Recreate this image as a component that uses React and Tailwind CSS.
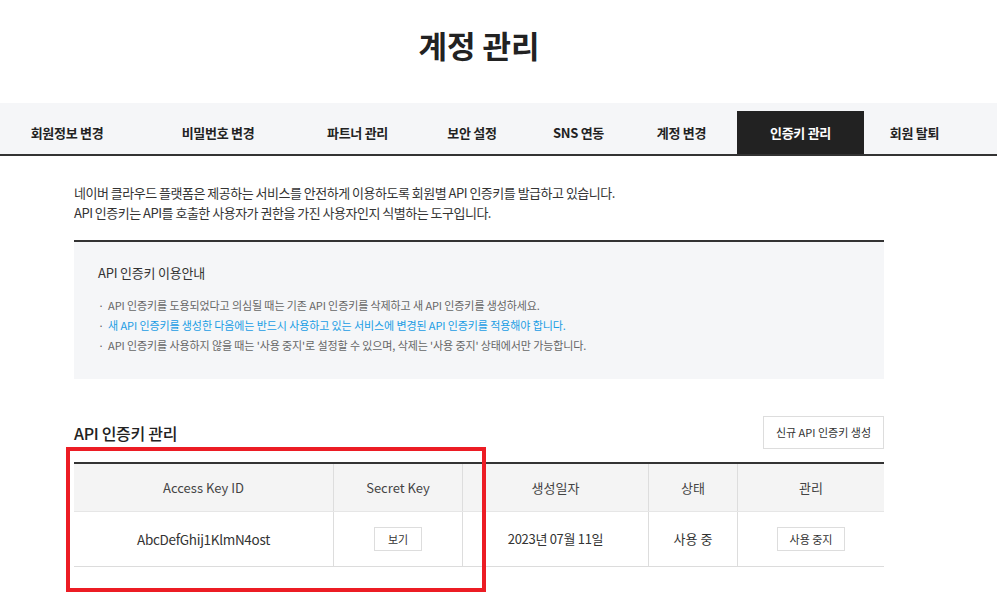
import React from "react";

const tabs = [
  { label: "회원정보 변경", w: "w-[134px]" },
  { label: "비밀번호 변경", w: "w-[168px]" },
  { label: "파트너 관리", w: "w-[111px]" },
  { label: "보안 설정", w: "w-[118px]" },
  { label: "SNS 연동", w: "w-[95px]" },
  { label: "계정 변경", w: "w-[111px]" },
  { label: "인증키 관리", w: "w-[127px]", active: true },
  { label: "회원 탈퇴", w: "w-[101px]" },
];

export default function App() {
  return (
    <div
      className="w-[997px] min-h-[596px] bg-white text-[#222]"
      style={{ fontFamily: "'Noto Sans CJK KR', 'Noto Sans', sans-serif" }}
    >
      <div className="w-[958px] h-[103px] flex justify-center">
        <h1 className="pt-[27px] text-[31px] leading-[36px] font-bold text-[#222]">계정 관리</h1>
      </div>

      <div className="w-full h-[53px] bg-[#f5f6f8] border-b-2 border-[#333] flex items-end">
        {tabs.map((t) => (
          <div
            key={t.label}
            className={`${t.w} h-[43px] flex items-center justify-center text-[13px] font-semibold tracking-[-0.3px] ${
              t.active ? "bg-[#222] text-white" : "text-[#222]"
            }`}
          >
            {t.label}
          </div>
        ))}
      </div>

      <div className="w-[958px] px-[74px]">
        <div className="mt-[27px] text-[13px] leading-[20px] tracking-[-0.5px] text-[#333]">
          <p>네이버 클라우드 플랫폼은 제공하는 서비스를 안전하게 이용하도록 회원별 API 인증키를 발급하고 있습니다.</p>
          <p>API 인증키는 API를 호출한 사용자가 권한을 가진 사용자인지 식별하는 도구입니다.</p>
        </div>

        <div className="mt-[17px] border-t-2 border-[#333] bg-[#f5f6f8] pt-[22px] pb-[24px] px-[24px]">
          <p className="text-[13px] leading-[18px] tracking-[-0.2px] text-[#333]">API 인증키 이용안내</p>
          <ul className="mt-[13px] text-[11px] leading-[20px] tracking-[-0.1px] text-[#666]">
            <li className="flex gap-[4px]"><span>·</span><span>API 인증키를 도용되었다고 의심될 때는 기존 API 인증키를 삭제하고 새 API 인증키를 생성하세요.</span></li>
            <li className="flex gap-[4px] text-[#1a9de4]"><span className="text-[#666]">·</span><span>새 API 인증키를 생성한 다음에는 반드시 사용하고 있는 서비스에 변경된 API 인증키를 적용해야 합니다.</span></li>
            <li className="flex gap-[4px]"><span>·</span><span>API 인증키를 사용하지 않을 때는 '사용 중지'로 설정할 수 있으며, 삭제는 '사용 중지' 상태에서만 가능합니다.</span></li>
          </ul>
        </div>

        <div className="mt-[37px] h-[33px] flex items-center justify-between">
          <h2 className="text-[16px] font-medium tracking-[-0.3px] text-[#222]">API 인증키 관리</h2>
          <button className="h-[33px] px-[12px] border border-[#ddd] bg-white text-[11px] text-[#333]">신규 API 인증키 생성</button>
        </div>

        <div className="relative mt-[13px]">
          <div className="border-t-2 border-[#333]">
            <div className="grid grid-cols-[260px_129px_186px_89px_146px] bg-[#f4f4f4] h-[48px] text-[13px] text-[#444] border-b border-[#e6e6e6]">
              <div className="flex items-center justify-center border-r border-[#ddd]">Access Key ID</div>
              <div className="flex items-center justify-center border-r border-[#ddd]">Secret Key</div>
              <div className="flex items-center justify-center border-r border-[#ddd]">생성일자</div>
              <div className="flex items-center justify-center border-r border-[#ddd]">상태</div>
              <div className="flex items-center justify-center">관리</div>
            </div>
            <div className="grid grid-cols-[260px_129px_186px_89px_146px] h-[55px] text-[13px] text-[#333] border-b border-[#dcdcdc]">
              <div className="flex items-center justify-center border-r border-[#ddd] text-[13.5px] tracking-[-0.3px]">AbcDefGhij1KlmN4ost</div>
              <div className="flex items-center justify-center border-r border-[#ddd]">
                <button className="h-[24px] px-[13px] border border-[#ddd] bg-white text-[11px] text-[#333]">보기</button>
              </div>
              <div className="flex items-center justify-center border-r border-[#ddd] tracking-[-0.3px]">2023년 07월 11일</div>
              <div className="flex items-center justify-center border-r border-[#ddd]">사용 중</div>
              <div className="flex items-center justify-center">
                <button className="h-[24px] px-[12px] border border-[#ddd] bg-white text-[11px] text-[#333]">사용 중지</button>
              </div>
            </div>
          </div>
          <div className="absolute left-[-8px] top-[-15px] w-[420px] h-[145px] border-4 border-[#ec1c24] pointer-events-none" />
        </div>
      </div>
    </div>
  );
}
